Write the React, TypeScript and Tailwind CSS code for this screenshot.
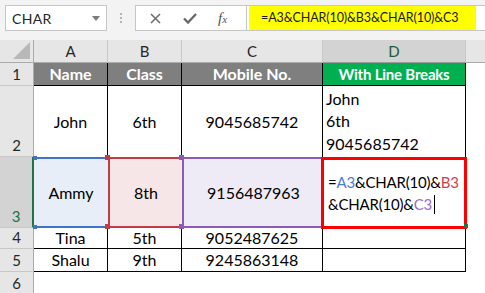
import React from "react";

const font = "font-['Lato','Liberation_Sans',sans-serif]";

function RowHead({ n, active }: { n: number; active?: boolean }) {
  return (
    <div
      className={
        "flex items-end justify-center pb-[1px] text-[15px] leading-[19px] border-b border-b-[#c8c8c8] " +
        (active
          ? "bg-[#d3d3d3] text-[#217346] border-r-2 border-r-[#217346]"
          : "bg-[#e6e6e6] text-[#262626] border-r border-r-[#ababab]")
      }
    >
      {n}
    </div>
  );
}

function ColHead({ l, active }: { l: string; active?: boolean }) {
  return (
    <div
      className={
        "flex items-center justify-center text-[15px] border-r border-r-[#c8c8c8] border-b " +
        (active
          ? "bg-[#d3d3d3] text-[#1e5a38] border-b-[#9a9a9a]"
          : "bg-[#e6e6e6] text-[#262626] border-b-[#ababab]")
      }
    >
      {l}
    </div>
  );
}

export default function App() {
  return (
    <div className={"w-[485px] h-[293px] overflow-hidden bg-white text-black " + font}>
      {/* formula bar */}
      <div className="h-[40px] bg-[#f3f3f3] flex items-start pt-[5px]">
        <div className="ml-[5px] w-[102px] h-[26px] bg-white border border-[#c6c6c6] flex items-center justify-between pl-[6px] pr-[6px]">
          <span className="text-[14px] text-[#262626] tracking-[0.3px]">CHAR</span>
          <svg width="8" height="5" viewBox="0 0 8 5">
            <path d="M0 0 L8 0 L4 5 Z" fill="#7b7b7b" />
          </svg>
        </div>
        <div className="ml-[13px] mt-[8px] flex flex-col gap-[2px]">
          <div className="w-[2px] h-[2px] bg-[#b4b4b4]" />
          <div className="w-[2px] h-[2px] bg-[#b4b4b4]" />
          <div className="w-[2px] h-[2px] bg-[#b4b4b4]" />
        </div>
        <div className="ml-[13px] w-[111px] h-[26px] bg-white border border-[#c6c6c6] border-r-0 flex items-center">
          <svg className="ml-[14px]" width="11" height="11" viewBox="0 0 11 11">
            <path d="M1 1 L10 10 M10 1 L1 10" stroke="#6a6a6a" strokeWidth="1.5" />
          </svg>
          <svg className="ml-[22px]" width="14" height="11" viewBox="0 0 14 11">
            <path d="M1 5.5 L5 9.5 L13 1" stroke="#6a6a6a" strokeWidth="2.4" fill="none" />
          </svg>
          <span className="ml-[21px] font-['Liberation_Serif',serif] italic text-[15px] text-[#555] leading-none">
            f<span className="text-[11px]">x</span>
          </span>
        </div>
        <div className="flex-1 h-[26px] bg-white border border-[#c6c6c6] border-r-0 flex items-center pl-[2px]">
          <div className="w-[227px] h-[24px] bg-[#ffff00] flex items-center pl-[12px] text-[12.5px] tracking-[-0.1px] text-[#1a1a1a] whitespace-nowrap">
            =A3&amp;CHAR(10)&amp;B3&amp;CHAR(10)&amp;C3
          </div>
        </div>
      </div>

      {/* sheet */}
      <div className="relative grid grid-cols-[34px_74px_74px_141px_143px_1fr] grid-rows-[23px_23px_71px_71px_21px_23px_23px] text-[16px]">
        {/* column headers */}
        <div className="bg-[#e6e6e6] border-r border-r-[#ababab] border-b border-b-[#ababab] flex items-end justify-end pr-[3px] pb-[3px]">
          <svg width="17" height="17" viewBox="0 0 17 17">
            <path d="M17 0 L17 17 L0 17 Z" fill="#b8b8b8" />
          </svg>
        </div>
        <ColHead l="A" />
        <ColHead l="B" />
        <ColHead l="C" />
        <ColHead l="D" active />
        <div className="bg-[#e6e6e6] border-b border-b-[#ababab]" />

        {/* row 1 */}
        <RowHead n={1} />
        <div className="bg-[#7f7f7f] text-white font-bold flex items-center justify-center border-r border-b border-black">Name</div>
        <div className="bg-[#7f7f7f] text-white font-bold flex items-center justify-center border-r border-b border-black">Class</div>
        <div className="bg-[#7f7f7f] text-white font-bold flex items-center justify-center border-r border-b border-black">Mobile No.</div>
        <div className="bg-[#00b050] text-white font-bold text-[15px] tracking-[-0.2px] flex items-center justify-center border-r border-b border-black whitespace-nowrap">With Line Breaks</div>
        <div />

        {/* row 2 */}
        <RowHead n={2} />
        <div className="flex items-center justify-center border-r border-black">John</div>
        <div className="flex items-center justify-center border-r border-black">6th</div>
        <div className="flex items-center justify-center border-r border-black">9045685742</div>
        <div className="flex flex-col justify-center pl-[3px] leading-[22.5px] border-r border-black">
          <span>John</span>
          <span>6th</span>
          <span>9045685742</span>
        </div>
        <div />

        {/* row 3 */}
        <RowHead n={3} active />
        <div className="bg-[#e8eef8] flex items-center justify-center border-y-2 border-[#3f74c6]">Ammy</div>
        <div className="bg-[#f7e6e7] flex items-center justify-center border-y-2 border-l-2 border-[#c43a45]">8th</div>
        <div className="bg-[#eeeaf6] flex items-center justify-center border-y-2 border-l-2 border-[#8a5cb8]">9156487963</div>
        <div className="relative border-r border-black">
          <div className="absolute -left-[2px] -right-[2px] top-0 -bottom-[1px] border-[3px] border-[#ff0000] flex flex-col justify-center pl-[4px] leading-[22px] text-[15px] tracking-[-0.2px] whitespace-nowrap">
            <span>
              =<span className="text-[#4a7fd6]">A3</span>&amp;CHAR(10)&amp;<span className="text-[#d0434d]">B3</span>
            </span>
            <span className="flex items-center">
              &amp;CHAR(10)&amp;<span className="text-[#9a6dc8]">C3</span>
              <span className="ml-[2px] w-[1px] h-[19px] bg-black" />
            </span>
          </div>
          <div className="absolute -right-[3px] bottom-[0px] w-[4px] h-[4px] bg-[#217346]" />
        </div>
        <div />

        {/* row 4 */}
        <RowHead n={4} />
        <div className="flex items-center justify-center border-r border-b border-black">Tina</div>
        <div className="flex items-center justify-center border-r border-b border-black">5th</div>
        <div className="flex items-center justify-center border-r border-b border-black">9052487625</div>
        <div className="border-r border-b border-black" />
        <div />

        {/* row 5 */}
        <RowHead n={5} />
        <div className="flex items-center justify-center border-r border-b border-black">Shalu</div>
        <div className="flex items-center justify-center border-r border-b border-black">9th</div>
        <div className="flex items-center justify-center border-r border-b border-black">9245863148</div>
        <div className="border-r border-b border-black" />
        <div />

        {/* row 6 */}
        <RowHead n={6} />
        <div />
        <div />
        <div />
        <div />
        <div />

        {/* range corner handles */}
        <div className="absolute left-[33px] top-[116px] w-[4px] h-[4px] bg-[#3f74c6]" />
        <div className="absolute left-[33px] top-[185px] w-[4px] h-[4px] bg-[#3f74c6]" />
        <div className="absolute left-[105px] top-[115px] w-[5px] h-[5px] bg-[#c43a45]" />
        <div className="absolute left-[105px] top-[184px] w-[5px] h-[5px] bg-[#c43a45]" />
        <div className="absolute left-[179px] top-[115px] w-[5px] h-[5px] bg-[#8a5cb8]" />
        <div className="absolute left-[179px] top-[184px] w-[5px] h-[5px] bg-[#8a5cb8]" />
      </div>
    </div>
  );
}
